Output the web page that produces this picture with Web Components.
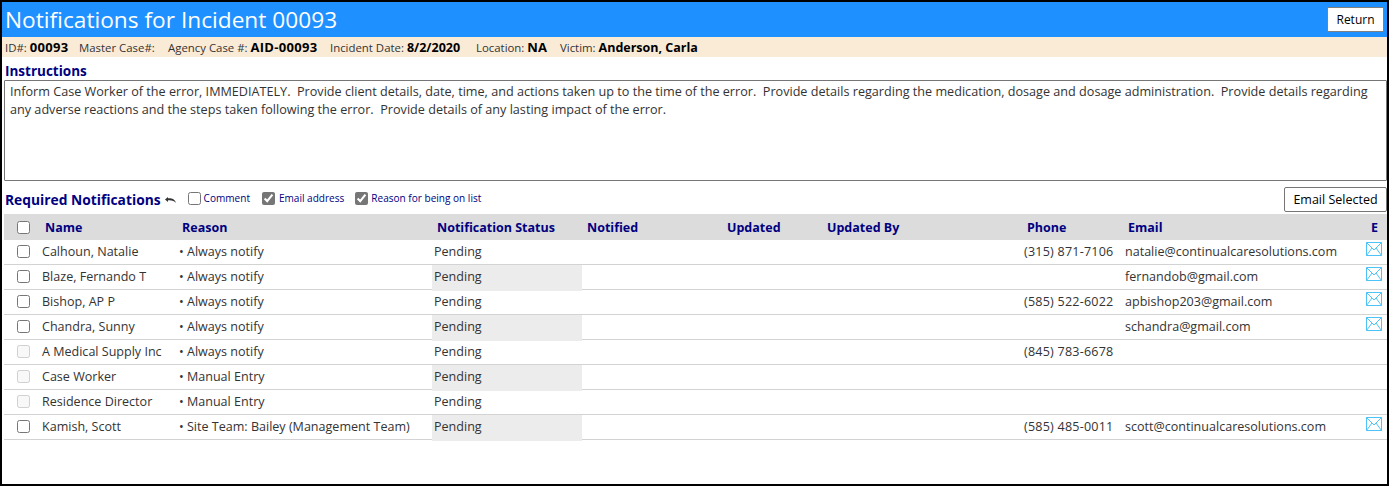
<!DOCTYPE html>
<html><head><meta charset="utf-8"><title>Notifications</title>
<style>
html,body{margin:0;padding:0;background:#fff}
body{font-family:"Open Sans","Noto Sans",sans-serif}
</style></head><body>
<notif-app>
  <page-header title-text="Notifications for Incident 00093"></page-header>
  <info-bar></info-bar>
  <instructions-panel>Inform Case Worker of the error, IMMEDIATELY.&nbsp; Provide client details, date, time, and actions taken up to the time of the error.&nbsp; Provide details regarding the medication, dosage and dosage administration.&nbsp; Provide details regarding any adverse reactions and the steps taken following the error.&nbsp; Provide details of any lasting impact of the error.</instructions-panel>
  <notif-toolbar></notif-toolbar>
  <notif-table></notif-table>
</notif-app>
<script>
const F='"Open Sans","Noto Sans",sans-serif';
function def(name,html){
  customElements.define(name,class extends HTMLElement{
    connectedCallback(){
      if(this.shadowRoot)return;
      const r=this.attachShadow({mode:'open'});
      r.innerHTML=typeof html==='function'?html(this):html;
    }
  });
}
def('notif-app',`<style>
:host{display:flex;flex-direction:column;box-sizing:border-box;width:1389px;height:486px;border:2px solid #000;overflow:hidden;background:#fff;font-family:${F}}
</style><slot></slot>`);
def('page-header',h=>`<style>
:host{display:flex;align-items:center;justify-content:space-between;height:35px;background:#1e90ff;padding:0 3px 0 3px;flex:none}
h1{margin:0;font:400 22.7px/35px ${F};color:#fff}
button{width:57px;height:25px;background:#fff;border:1px solid #808080;font:12px ${F};color:#000;padding:0;margin-top:-1px}
</style><h1>${h.getAttribute('title-text')}</h1><button>Return</button>`);
def('info-bar',`<style>
:host{display:flex;align-items:center;height:20px;background:#faebd7;padding-left:3px;flex:none;font:11.4px/20px ${F};color:#333;white-space:nowrap}
b{font-size:13px;font-weight:700;color:#000}
b.d{letter-spacing:.3px}
b.n{font-size:12.5px}
span{display:block;padding-top:1px}
</style>
<span style="width:74px">ID#: <b class="d">00093</b></span><span style="width:89px">Master Case#:</span><span style="width:162px">Agency Case #: <b class="d">AID-00093</b></span><span style="width:146px">Incident Date: <b class="n">8/2/2020</b></span><span style="width:84px">Location: <b>NA</b></span><span>Victim: <b class="n">Anderson, Carla</b></span>`);
def('instructions-panel',`<style>
:host{display:block;flex:none;padding:6px 0 0 3px}
h2{margin:0;font:700 13.5px/17px ${F};color:#000080}
div{box-sizing:border-box;height:101px;margin:0 0 0 -1px;border:1px solid #767676;border-radius:1px;padding:2px 10px 2px 5px;font:12.63px/18px ${F};color:#333}
</style><h2>Instructions</h2><div><slot></slot></div>`);
def('notif-toolbar',`<style>
:host{display:flex;align-items:flex-end;flex:none;height:32px;padding:0 0 1px 3px;color:#000080}
h2{margin:0 0 3px;font:700 13.8px/20px ${F};color:#000080;white-space:nowrap}
svg{margin:0 12px 10px 4px}
label{display:flex;align-items:center;font:10.05px/16px ${F};margin:0 11px 7px 0}
label:first-of-type{margin-right:12px}
input{margin:0 3px 0 0;width:13px;height:13px;accent-color:#767676}
input[checked]{margin-right:4px}
label:last-of-type input{margin-right:3px}
button{margin-left:auto;margin-bottom:1px;width:103px;height:25px;background:#fff;border:1px solid #767676;border-radius:2px;font:12.5px ${F};color:#000;padding:0}
</style><h2>Required Notifications</h2>
<svg width="11" height="6" viewBox="0 0 11 6"><path d="M0 2.400 3 0v1.300C7 1.100 9.800 2.200 11 6 9.200 3.800 7 3.100 3 3.300V5Z" fill="#333"/></svg>
<label><input type="checkbox">Comment</label><label><input type="checkbox" checked>Email address</label><label><input type="checkbox" checked>Reason for being on list</label>
<button>Email Selected</button>`);
const COLS='36px 137px 255px 150px 140px 100px 200px 101px 1fr 26px';
const envelope=`<svg width="16" height="15" viewBox="0 0 16 15"><path d="M.5 .5h15v13H.5ZM.5 .5 8 8l7.500-7.500M.5 13.500l5.500-7.500M15.500 13.500 10 6" fill="none" stroke="#4dc3f7" stroke-width="1"/></svg>`;
def('notif-head',`<style>
:host{display:grid;grid-template-columns:${COLS};height:26px;align-items:center;background:#dcdcdc;font:700 12.5px ${F};color:#000080;white-space:nowrap}
span{padding-left:5px}
input{margin:0 0 0 13px;width:13px;height:13px}
.e{text-align:right;padding:0 9px 0 0}
</style><div style="display:flex"><input type="checkbox"></div><span>Name</span><span>Reason</span><span>Notification Status</span><span>Notified</span><span>Updated</span><span>Updated By</span><span>Phone</span><span>Email</span><span class="e">E</span>`);
customElements.define('notif-row',class extends HTMLElement{
  connectedCallback(){
    if(this.shadowRoot)return;
    const g=a=>this.getAttribute(a)||'';
    this.attachShadow({mode:'open'}).innerHTML=`<style>
:host{display:grid;grid-template-columns:${COLS};height:25px;box-sizing:border-box;border-bottom:1px solid #d3d3d3;font:12.55px/24px ${F};color:#333;white-space:nowrap}
span{padding-left:2px;overflow:hidden}
.st{background:${this.hasAttribute('shade')?'#ececec':'transparent'}}
.ph{letter-spacing:.22px}
input{margin:5px 0 0 13px;width:13px;height:13px}
.e{padding:0;display:flex;justify-content:flex-end}
svg{margin:2px 5px 0 0}
</style><div><input type="checkbox" ${this.hasAttribute('off')?'disabled':''}></div><span>${g('name')}</span><span>• ${g('reason')}</span><span class="st">Pending</span><span></span><span></span><span></span><span class="ph">${g('phone')}</span><span>${g('email')}</span><span class="e">${g('email')?envelope:''}</span>`;
  }
});
const rows=[
['Calhoun, Natalie','Always notify','(315) 871-7106','natalie@continualcaresolutions.com',0,0],
['Blaze, Fernando T','Always notify','','fernandob@gmail.com',1,0],
['Bishop, AP P','Always notify','(585) 522-6022','apbishop203@gmail.com',0,0],
['Chandra, Sunny','Always notify','','schandra@gmail.com',1,0],
['A Medical Supply Inc','Always notify','(845) 783-6678','',0,1],
['Case Worker','Manual Entry','','',1,1],
['Residence Director','Manual Entry','','',0,1],
['Kamish, Scott','Site Team: Bailey (Management Team)','(585) 485-0011','scott@continualcaresolutions.com',1,0]];
customElements.define('notif-table',class extends HTMLElement{
  connectedCallback(){
    if(this.shadowRoot)return;
    const r=this.attachShadow({mode:'open'});
    r.innerHTML=`<style>:host{display:block;flex:none;margin-left:2px}</style><notif-head></notif-head>`+rows.map(x=>`<notif-row name="${x[0]}" reason="${x[1]}" phone="${x[2]}" email="${x[3]}" ${x[4]?'shade':''} ${x[5]?'off':''}></notif-row>`).join('');
  }
});
</script>
</body></html>
